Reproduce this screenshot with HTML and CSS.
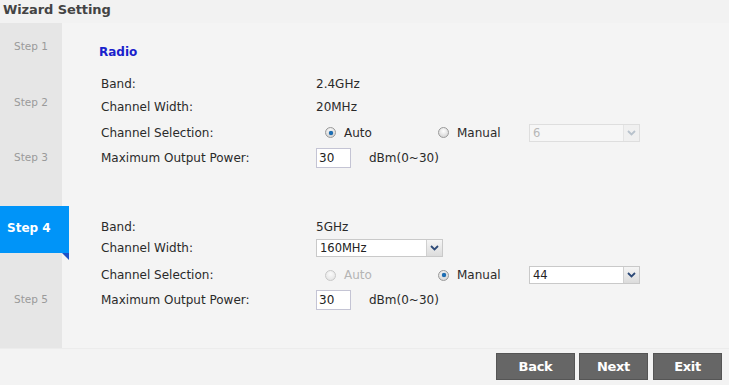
FILE: index.html
```html
<!DOCTYPE html>
<html>
<head>
<meta charset="utf-8">
<link rel="stylesheet" href="styles.css">
</head>
<body>
<div class="page">
  <div class="title">Wizard Setting</div>
  <div class="main">
    <div class="sidebar">
      <div class="step s1">Step 1</div>
      <div class="step s2">Step 2</div>
      <div class="step s3">Step 3</div>
      <div class="step active">Step 4<span class="fold"></span></div>
      <div class="step s5">Step 5</div>
    </div>
    <div class="content">
      <div class="heading">Radio</div>
      <div class="section first">
        <div class="row r1"><div class="label">Band:</div><div class="val">2.4GHz</div></div>
        <div class="row r2"><div class="label">Channel Width:</div><div class="val">20MHz</div></div>
        <div class="row r3">
          <div class="label">Channel Selection:</div>
          <div class="val">
            <div class="rgroup auto"><span class="radio on"></span><span>Auto</span></div>
            <div class="rgroup manual"><span class="radio"></span><span>Manual</span></div>
            <div class="select small disabled"><span class="stext">6</span><span class="arrow"><svg width="9" height="6" viewBox="0 0 9 6"><path d="M1 1 L4.5 4.5 L8 1" fill="none" stroke="#b8c2cc" stroke-width="1.8"/></svg></span></div>
          </div>
        </div>
        <div class="row r4">
          <div class="label">Maximum Output Power:</div>
          <div class="val"><span class="input">30</span><span class="unit">dBm(0~30)</span></div>
        </div>
      </div>
      <div class="section second">
        <div class="row r1"><div class="label">Band:</div><div class="val">5GHz</div></div>
        <div class="row r2">
          <div class="label">Channel Width:</div>
          <div class="val"><div class="select wide"><span class="stext">160MHz</span><span class="arrow"><svg width="9" height="6" viewBox="0 0 9 6"><path d="M1 1 L4.5 4.5 L8 1" fill="none" stroke="#2d4a78" stroke-width="1.8"/></svg></span></div></div>
        </div>
        <div class="row r3">
          <div class="label">Channel Selection:</div>
          <div class="val">
            <div class="rgroup auto dim"><span class="radio off"></span><span>Auto</span></div>
            <div class="rgroup manual"><span class="radio on"></span><span>Manual</span></div>
            <div class="select small"><span class="stext">44</span><span class="arrow"><svg width="9" height="6" viewBox="0 0 9 6"><path d="M1 1 L4.5 4.5 L8 1" fill="none" stroke="#2d4a78" stroke-width="1.8"/></svg></span></div>
          </div>
        </div>
        <div class="row r4">
          <div class="label">Maximum Output Power:</div>
          <div class="val"><span class="input">30</span><span class="unit">dBm(0~30)</span></div>
        </div>
      </div>
    </div>
  </div>
  <div class="footer">
    <button class="btn back">Back</button>
    <button class="btn next">Next</button>
    <button class="btn exit">Exit</button>
  </div>
</div>
</body>
</html>
```
FILE: styles.css
```css
* { box-sizing: border-box; }
html, body { margin: 0; padding: 0; }
body {
  width: 729px;
  height: 385px;
  overflow: hidden;
  background: #f3f3f3;
  font-family: "DejaVu Sans", sans-serif;
  color: #2a2a2a;
}
.page { width: 729px; height: 385px; display: flex; flex-direction: column; }
.title {
  height: 23px;
  padding: 2px 0 0 3px;
  font-size: 13px;
  font-weight: bold;
  color: #444;
  background: #f2f2f2;
  letter-spacing: -0.1px;
}
.main { display: flex; height: 325px; background: #f4f4f4; }
.sidebar {
  width: 62px;
  background: #e6e6e6;
  display: flex;
  flex-direction: column;
  position: relative;
}
.step {
  font-size: 10.5px;
  color: #9a9a9a;
  text-align: center;
  width: 62px;
}
.s1 { margin-top: 17px; height: 56px; }
.s2 { height: 55px; }
.s3 { height: 55px; }
.step.active {
  width: 69px;
  height: 47px;
  background: #0094f8;
  color: #fff;
  font-weight: bold;
  font-size: 12px;
  text-align: left;
  padding: 15px 0 0 7px;
  position: relative;
  z-index: 1;
}
.fold {
  position: absolute;
  right: 0;
  bottom: -7px;
  width: 0;
  height: 0;
  border-top: 7px solid #1c52c8;
  border-left: 7px solid transparent;
}
.s5 { margin-top: 40px; }
.content { flex: 1; padding: 22px 0 0 37px; }
.heading {
  font-size: 12px;
  line-height: 14px;
  font-weight: bold;
  color: #1a22cc;
  height: 27px;
}
.section { padding-left: 2px; }
.second { margin-top: 48px; }
.row { display: flex; align-items: center; font-size: 12px; }
.first .r1 { height: 23px; }
.first .r2 { height: 23px; }
.first .r3 { height: 29px; }
.first .r4 { height: 21px; }
.second .r1 { height: 21px; }
.second .r2 { height: 22px; }
.second .r3 { height: 32px; }
.second .r4 { height: 18px; }
.label { width: 215px; }
.val { display: flex; align-items: center; }
.rgroup { display: flex; align-items: center; gap: 8px; }
.rgroup.auto { width: 113px; padding-left: 9px; }
.rgroup.manual { width: 100px; padding-left: 9px; }
.rgroup.dim { color: #b5b5b5; }
.radio {
  width: 11px;
  height: 11px;
  border-radius: 50%;
  border: 1px solid #9a9a9a;
  background: radial-gradient(circle at 50% 35%, #ffffff, #cccccc);
  position: relative;
}
.radio.off { border-color: #c8c8c8; background: radial-gradient(circle at 50% 35%, #fafafa, #e0e0e0); }
.radio.on::after {
  content: "";
  position: absolute;
  left: 2.5px;
  top: 2.5px;
  width: 4px;
  height: 4px;
  border-radius: 50%;
  background: #1a6fb8;
  box-shadow: 0 0 1px #0a3a6a;
}
.select {
  height: 18px;
  border: 1px solid #c9c9c9;
  background: #fff;
  display: flex;
  align-items: center;
  font-size: 11.5px;
}
.select.small { width: 111px; }
.select.wide { width: 127px; }
.stext { flex: 1; padding-left: 3px; color: #222; }
.select.disabled { background: #f6f6f6; border-color: #dedede; }
.select.disabled .stext { color: #b8b8b8; }
.arrow {
  width: 16px;
  height: 16px;
  display: flex;
  align-items: center;
  justify-content: center;
  background: linear-gradient(#f5f5f5, #dcdcdc);
  border-left: 1px solid #d0d0d0;
}
.select.disabled .arrow { background: #f0f0f0; border-left-color: #e4e4e4; }
.input {
  width: 35px;
  height: 20px;
  border: 1px solid #c4c4d4;
  background: #fff;
  font-size: 12px;
  padding: 2px 0 0 2px;
  color: #222;
}
.unit { margin-left: 18px; }
.footer {
  flex: 1;
  display: flex;
  justify-content: flex-end;
  align-items: flex-start;
  padding: 4px 7px 0 0;
  background: #f3f3f3;
  border-top: 1px solid #ececec;
}
.btn {
  height: 27px;
  border: 1px solid #555;
  background: #666;
  color: #fff;
  font-family: "DejaVu Sans", sans-serif;
  font-weight: bold;
  font-size: 13px;
  padding: 0;
  letter-spacing: -0.3px;
}
.btn.back { width: 79px; margin-right: 4px; }
.btn.next { width: 69px; margin-right: 5px; }
.btn.exit { width: 69px; }
```
